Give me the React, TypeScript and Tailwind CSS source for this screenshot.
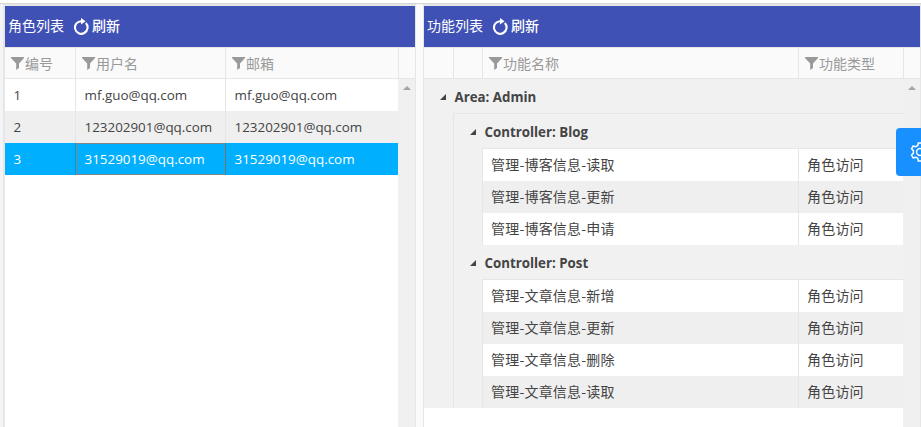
import React from 'react';

const latin = "font-['Open_Sans','Noto_Sans_CJK_SC',sans-serif]";
const cjk = "font-['Noto_Sans_CJK_SC','Noto_Sans_CJK_JP',sans-serif]";

function Funnel() {
  return (
    <svg width="13" height="13" viewBox="0 0 13 13" className="mr-px shrink-0" fill="#999999">
      <path d="M0 0H13V1L8 6.4V11L5.2 13V6.4L0 1Z" />
    </svg>
  );
}

function Refresh() {
  return (
    <svg width="16" height="17" viewBox="0 0 16 17" className="shrink-0" fill="none">
      <path d="M12.8 5.1A6.3 6.3 0 1 1 8.6 3.2" stroke="#fff" strokeWidth="2.1" />
      <path d="M8 0L12.6 3.2L8 6.6Z" fill="#fff" />
    </svg>
  );
}

function Toolbar({ title }: { title: string }) {
  return (
    <div className={`flex h-[41px] shrink-0 items-center bg-[#3f51b5] pl-[3px] text-[14px] leading-5 text-white ${cjk}`}>
      <span className="w-[65px] shrink-0 whitespace-nowrap pb-1">{title}</span>
      <Refresh />
      <span className="ml-[3px] whitespace-nowrap pb-[3px] font-medium">刷新</span>
    </div>
  );
}

function HeaderCell({ label, width, last }: { label?: string; width: string; last?: boolean }) {
  return (
    <div className={`flex h-full shrink-0 items-center ${width} ${last ? '' : 'border-r border-[#e6e6e6]'} ${label ? 'pl-1.5' : ''}`}>
      {label && <Funnel />}
      {label && <span className="whitespace-nowrap">{label}</span>}
    </div>
  );
}

function HeaderRow({ children }: { children: React.ReactNode }) {
  return (
    <div className={`flex h-8 shrink-0 border-y border-[#e6e6e6] bg-[#fafafa] text-[14px] leading-5 text-[#999999] ${cjk}`}>
      {children}
    </div>
  );
}

function ScrollTrack() {
  return (
    <div className="flex w-[17px] shrink-0 justify-center bg-[#f0f0f0] pt-[7px]">
      <svg width="8" height="4" viewBox="0 0 8 4" fill="#a3a3a3">
        <path d="M0 4L4 0L8 4Z" />
      </svg>
    </div>
  );
}

const users = [
  { id: 1, name: 'mf.guo@qq.com' },
  { id: 2, name: '123202901@qq.com' },
  { id: 3, name: '31529019@qq.com' },
];

function UserRow({ id, name }: { id: number; name: string }) {
  const active = id === 3;
  const tone = active ? 'bg-[#00b0ff] text-white' : id === 2 ? 'bg-[#efefef] text-[#444444]' : 'bg-white text-[#444444]';
  const line = active ? 'border-[#0099dd]' : 'border-[#e6e6e6]';
  return (
    <div className={`flex h-8 text-[13.4px] leading-8 ${latin} ${tone}`}>
      <div className={`w-[71px] shrink-0 border-r pl-[8.5px] ${line}`}>{id}</div>
      <div className={`w-[150px] shrink-0 border-r pl-[8.5px] ${line} ${active ? 'shadow-[inset_0_0_0_1px_#80868a]' : ''}`}>{name}</div>
      <div className="flex-1 pl-[8.5px]">{name}</div>
    </div>
  );
}

function Caret() {
  return (
    <svg width="6" height="6" viewBox="0 0 6 6" fill="#444444" className="shrink-0">
      <path d="M6 0V6H0Z" />
    </svg>
  );
}

function GroupTitle({ text }: { text: string }) {
  return (
    <div className={`flex h-[34px] items-center pl-4 pt-0.5 text-[13.3px] font-bold text-[#444444] ${latin}`}>
      <Caret />
      <span className="ml-[8.5px] whitespace-nowrap pt-0.5">{text}</span>
    </div>
  );
}

function Controller({ name, items }: { name: string; items: string[] }) {
  return (
    <section>
      <GroupTitle text={`Controller: ${name}`} />
      <div className="ml-7 border-l border-t border-[#e6e6e6]">
        {items.map((item, i) => (
          <div key={item} className={`flex h-8 text-[14px] leading-[30px] text-[#444444] ${cjk} ${i % 2 ? 'bg-[#efefef]' : 'bg-white'}`}>
            <div className="w-[316px] shrink-0 border-r border-[#e6e6e6] pl-2 tracking-[0.2px]">{item}</div>
            <div className="flex-1 pl-2 tracking-[0.2px]">角色访问</div>
          </div>
        ))}
      </div>
    </section>
  );
}

export default function App() {
  return (
    <div className="flex h-[427px] w-[921px] flex-col overflow-hidden bg-white">
      <div className="h-1 shrink-0 border-b border-[#d6d6d6]" />
      <main className="relative flex min-h-0 flex-1 bg-[#fafafa]">
        <div className="w-[3px] shrink-0 bg-[#f3f4f7]" />
        <section className="flex w-[413px] shrink-0 flex-col border-l-2 border-r border-t-2 border-[#e6e6e6] bg-white">
          <Toolbar title="角色列表" />
          <HeaderRow>
            <HeaderCell label="编号" width="w-[71px]" />
            <HeaderCell label="用户名" width="w-[150px]" />
            <HeaderCell label="邮箱" width="w-[173px]" />
            <HeaderCell width="w-4" last />
          </HeaderRow>
          <div className="flex min-h-0 flex-1">
            <div className="min-w-0 flex-1">
              {users.map((u) => (
                <UserRow key={u.id} id={u.id} name={u.name} />
              ))}
            </div>
            <ScrollTrack />
          </div>
        </section>
        <div className="w-[7px] shrink-0" />
        <section className="flex w-[498px] shrink-0 flex-col border-x border-t-2 border-[#e6e6e6] bg-white">
          <Toolbar title="功能列表" />
          <HeaderRow>
            <HeaderCell width="w-[30px]" />
            <HeaderCell width="w-[29px]" />
            <HeaderCell label="功能名称" width="w-[316px]" />
            <HeaderCell label="功能类型" width="w-[105px]" />
            <HeaderCell width="w-4" last />
          </HeaderRow>
          <div className="flex min-h-0 flex-1">
            <div className="min-w-0 flex-1">
              <div className="bg-[#f1f1f1]">
                <GroupTitle text="Area: Admin" />
                <div className="ml-[29px] border-l border-t border-[#e6e6e6]">
                  <Controller name="Blog" items={['管理-博客信息-读取', '管理-博客信息-更新', '管理-博客信息-申请']} />
                  <Controller name="Post" items={['管理-文章信息-新增', '管理-文章信息-更新', '管理-文章信息-删除', '管理-文章信息-读取']} />
                </div>
              </div>
            </div>
            <ScrollTrack />
          </div>
        </section>
        <button className="absolute right-0 top-[124px] flex h-12 w-[25px] items-center overflow-hidden rounded-l bg-[#1890ff] pl-3.5">
          <svg width="20" height="20" viewBox="0 0 20 20" fill="none" stroke="#fff" strokeWidth="1.5" strokeLinejoin="round" className="shrink-0">
            <path d="M7.8 3.5L8.3 1H11.7L12.2 3.5L14.3 4.7L16.8 3.9L18.5 6.8L16.6 8.6V11.2L18.5 13L16.8 16L14.3 15.2L12.2 16.4L11.7 19H8.3L7.8 16.4L5.7 15.2L3.2 16L1.5 13L3.4 11.2V8.6L1.5 6.8L3.2 3.9L5.7 4.7Z" />
            <circle cx="10" cy="10" r="3.4" />
          </svg>
        </button>
      </main>
    </div>
  );
}
